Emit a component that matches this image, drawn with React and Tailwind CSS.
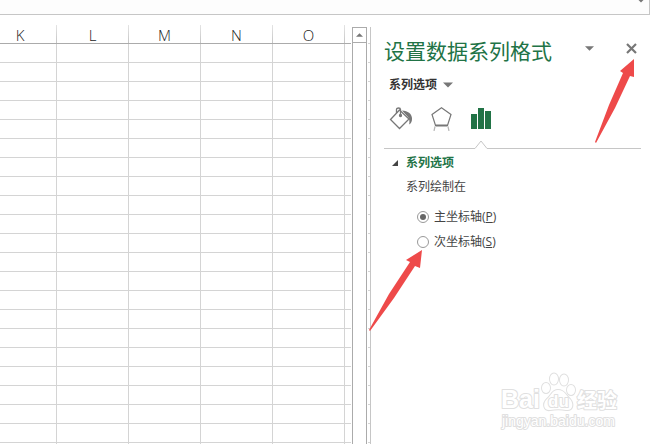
import React, { useState } from 'react';

const columns = ['K', 'L', 'M', 'N', 'O'];
const rows = Array.from({ length: 60 }, (_, i) => i + 1);

const axes = [
  { id: 'primary', label: '主坐标轴', accessKey: 'P' },
  { id: 'secondary', label: '次坐标轴', accessKey: 'S' },
];

function Triangle({ className }) {
  return (
    <svg viewBox="0 0 10 5" className={className} aria-hidden="true">
      <path d="M0 0h10L5 5z" fill="currentColor" />
    </svg>
  );
}

function FormulaBar() {
  return (
    <div className="mr-1 flex h-[15px] shrink-0 items-start justify-end overflow-hidden border-r border-b border-[#c6c6c6] bg-[#fdfdfd] pr-1">
      <button type="button" aria-label="展开编辑栏" className="-mt-0.5 text-[#777]">
        <Triangle className="h-[5px] w-2" />
      </button>
    </div>
  );
}

function Sheet() {
  return (
    <div className="min-w-0 flex-1 overflow-hidden">
      <table className="-ml-4 w-[calc(100%+16px)] table-fixed border-separate border-spacing-0">
        <thead>
          <tr>
            {columns.map((name, i) => (
              <th
                key={name}
                className={`${i === 0 ? 'w-[73px]' : 'w-[72px]'} h-[29px] border-b border-[#ababab] bg-[linear-gradient(transparent_35%,#e4e4e4_36%,#c6c6c6)] bg-[length:1px_100%] bg-right bg-no-repeat p-0 pt-3 pr-px text-center font-['Open_Sans','Noto_Sans',sans-serif] text-[15px] leading-4 font-light text-[#222]`}
              >
                {name}
              </th>
            ))}
            <td className="border-b border-[#ababab] p-0"></td>
          </tr>
        </thead>
        <tbody>
          {rows.map((row) => (
            <tr key={row}>
              {columns.map((name) => (
                <td key={name} className="h-[19px] border-r border-b border-[#d4d4d4] p-0"></td>
              ))}
              <td className="border-b border-[#d4d4d4] p-0"></td>
            </tr>
          ))}
        </tbody>
      </table>
    </div>
  );
}

function ScrollBar() {
  return (
    <div className="mt-3 ml-px flex w-[15px] shrink-0 flex-col border-x border-t border-[#ababab]">
      <button
        type="button"
        aria-label="向上滚动"
        className="flex h-[15px] items-center justify-center border-b border-[#ababab] text-[#777]"
      >
        <Triangle className="h-1 w-[7px] rotate-180" />
      </button>
    </div>
  );
}

// Sliver of the grid that shows between the scroll bar and the pane
function GridEdge() {
  return (
    <div className="ml-px flex w-[3px] shrink-0 flex-col pt-3">
      <div className="h-4 shrink-0 border-r border-[#c6c6c6]"></div>
      <div className="flex-1 border-r border-[#c6c6c6] bg-[repeating-linear-gradient(#d4d4d4_0px,#d4d4d4_1px,transparent_1px,transparent_19px)]"></div>
    </div>
  );
}

function FillIcon() {
  return (
    <svg viewBox="0 0 24 24" className="size-6" fill="none" stroke="#777" strokeWidth="1.3">
      <path d="M10.5 3 20 12l-9.5 9.5-9-9z" />
      <path d="M7.5 6V2.5c0-2 4-2 4 0V8" />
      <circle cx="11.5" cy="8.5" r="1" fill="#777" />
      <path d="M13 3.5c6 .5 9.5 3 10 7.5.2 3-.8 5.500-2.800 6.500.5-3 .3-5.500-1.200-7.500z" fill="#777" stroke="none" />
    </svg>
  );
}

function EffectsIcon() {
  return (
    <svg viewBox="0 0 24 24" className="size-6" fill="none" stroke="#777" strokeWidth="1.2">
      <path d="M12.5.8 22 7.5l-3.5 11h-12L3 7.5z" />
      <path d="M6.500 18.500h12" strokeWidth="2" />
      <path d="M6 19.500 5 24M19 19.500l1 4.500" stroke="#b5b5b5" />
    </svg>
  );
}

function SeriesIcon() {
  return (
    <svg viewBox="0 0 24 24" className="size-6" fill="#217346">
      <path d="M2 7h6v15H2zM9 1h6v21H9zM16 4h6v18h-6z" />
    </svg>
  );
}

function FormatPane() {
  const [axis, setAxis] = useState('primary');

  return (
    <aside className="w-[283px] shrink-0 pt-5 pr-[13px] pl-[13px] text-xs text-[#444]">
      {/* Title */}
      <div className="flex h-8 items-center">
        <h1 className="flex-1 text-[21px] leading-8 font-normal text-[#217346]">设置数据系列格式</h1>
        <button type="button" aria-label="任务窗格选项" className="mr-8 -mt-1.5 text-[#777]">
          <Triangle className="h-[5px] w-[9px]" />
        </button>
        <button type="button" aria-label="关闭" className="mr-1 -mt-1.5 text-[#777]">
          <svg viewBox="0 0 11 11" className="size-[11px]" stroke="currentColor" strokeWidth="2.2">
            <path d="M1 1l9 9M10 1l-9 9" />
          </svg>
        </button>
      </div>

      <button type="button" className="mt-2 ml-[5px] flex h-5 items-center gap-1.5 font-bold text-[#333]">
        系列选项
        <Triangle className="h-[6px] w-[10px] text-[#777]" />
      </button>

      {/* Tabs */}
      <div className="mt-3 ml-[5px] flex gap-4">
        <button type="button" aria-label="填充与线条">
          <FillIcon />
        </button>
        <button type="button" aria-label="效果">
          <EffectsIcon />
        </button>
        <button type="button" aria-label="系列选项标签">
          <SeriesIcon />
        </button>
      </div>
      <div className="mt-[9px] flex items-end">
        <div className="w-[90px] border-b border-[#c6c6c6]"></div>
        <svg viewBox="0 0 14 9" className="h-[9px] w-[14px]" fill="none" stroke="#c6c6c6">
          <path d="M0 8.500h1L7 1l6 7.500h1" />
        </svg>
        <div className="flex-1 border-b border-[#c6c6c6]"></div>
      </div>

      {/* Series options */}
      <button type="button" className="mt-1 ml-2 flex h-5 items-center gap-2 font-bold text-[#217346]">
        <svg viewBox="0 0 6 6" className="size-1.5" fill="#444">
          <path d="M6 0v6H0z" />
        </svg>
        系列选项
      </button>
      <fieldset className="mt-1 ml-[22px]">
        <legend className="h-5 leading-5">系列绘制在</legend>
        <div className="mt-[10px] ml-[11px] flex flex-col gap-[5px]">
          {axes.map((item) => (
            <label key={item.id} className="flex h-5 items-center gap-[5px]">
              <input
                type="radio"
                name="axis"
                value={item.id}
                checked={axis === item.id}
                onChange={() => setAxis(item.id)}
                className="grid size-3 appearance-none place-content-center rounded-full border border-[#999] before:size-1.5 before:rounded-full checked:before:bg-[#666]"
              />
              <span>
                {item.label}(<u>{item.accessKey}</u>)
              </span>
            </label>
          ))}
        </div>
      </fieldset>
    </aside>
  );
}

function Watermark() {
  return (
    <svg
      viewBox="0 0 126 62"
      className="pointer-events-none absolute right-7 bottom-3 h-[62px] w-[126px]"
      fill="#fff"
      stroke="#e0e0e0"
      strokeWidth="2"
      strokeLinejoin="round"
      paintOrder="stroke"
      fontFamily="'Liberation Sans', 'Noto Sans CJK SC', sans-serif"
      fontWeight="bold"
    >
      <text x="1" y="38" fontSize="25">Bai</text>
      <ellipse cx="46" cy="18" rx="4" ry="5" />
      <ellipse cx="54" cy="9" rx="4" ry="5.5" />
      <ellipse cx="64" cy="10" rx="4" ry="5.5" />
      <ellipse cx="71" cy="20" rx="4" ry="5" />
      <path d="M58 20c-6 0-7 6-11 9-5 5-3 12 3 11 6-1 11-1 16 0 7 1 8-6 4-11-4-3-5-9-12-9z" />
      <text x="48" y="37" fontSize="17">du</text>
      <text x="77" y="38" fontSize="20">经验</text>
      <text x="2" y="56" fontSize="14" fontWeight="normal">
        jingyan.baidu.com
      </text>
    </svg>
  );
}

function App() {
  return (
    <div className="relative flex h-screen flex-col overflow-hidden bg-white font-['Open_Sans','Noto_Sans_CJK_SC',sans-serif]">
      <FormulaBar />
      <main className="flex min-h-0 flex-1">
        <Sheet />
        <ScrollBar />
        <GridEdge />
        <FormatPane />
      </main>

      {/* Arrows pointing at the close button and the second radio */}
      <svg
        viewBox="0 0 40 84"
        className="pointer-events-none absolute top-[59px] right-[19px] h-[84px] w-10"
        fill="#ee4a4a"
      >
        <path d="M0 83 14 46 28 14 25 12 39 0V18L35 17 20 49 1 84z" />
      </svg>
      <svg
        viewBox="0 0 54 82"
        className="pointer-events-none absolute top-[250px] right-[231px] h-[82px] w-[54px]"
        fill="#ee4a4a"
      >
        <path d="M0 80 20 44 41 12 37 10 53 0 51 18 46 16 25 48 1 81z" />
      </svg>
      <Watermark />
    </div>
  );
}

export default App;
